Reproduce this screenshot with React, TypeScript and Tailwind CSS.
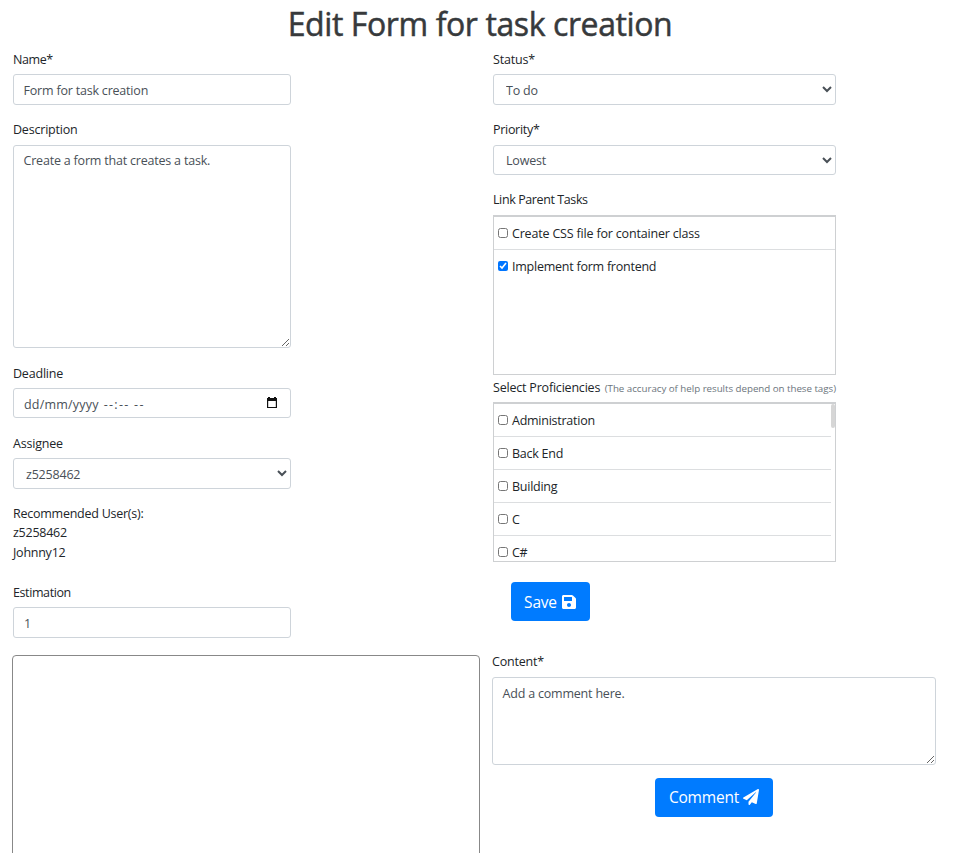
import { FaSave, FaPaperPlane } from "react-icons/fa";

const field =
  "block w-full rounded-[3px] border border-[#ced4da] bg-white text-[12.5px] leading-[19px] tracking-[-0.2px] text-[#495057] outline-none";

function Label({ children, className = "" }: { children: React.ReactNode; className?: string }) {
  return (
    <label className={`block h-6 pt-px text-[12.5px] leading-[18px] tracking-[-0.2px] whitespace-nowrap ${className}`}>
      {children}
    </label>
  );
}

function CheckRow({
  label,
  checked = false,
  last = false,
  className = "pt-px",
}: {
  label: string;
  checked?: boolean;
  last?: boolean;
  className?: string;
}) {
  return (
    <label
      className={`flex h-[33px] shrink-0 items-center gap-1 pl-1 text-[12.5px] ${last ? "pb-px" : "border-b border-[#dcdee0]"}`}
    >
      <input type="checkbox" defaultChecked={checked} className="m-0 size-[10px] shrink-0" />
      <span className={`leading-5 ${className}`}>{label}</span>
    </label>
  );
}

export default function App() {
  return (
    <div className="h-[853px] w-[953px] overflow-hidden bg-white font-['Open_Sans','Noto_Sans',sans-serif] text-[#212529]">
      <h1 className="h-[50px] w-[960px] pt-[5px] text-center text-[32px] leading-[38px] font-medium tracking-[-0.4px] whitespace-nowrap text-[#373a3c] [-webkit-text-stroke:0.5px_#373a3c]">
        Edit Form for task creation
      </h1>
      <div className="flex h-[605px] pl-[13px]">
        <div className="mr-[202px] w-[278px]">
          <Label className="tracking-[-0.4px]">Name*</Label>
          <input className={`${field} h-[31px] px-[9.5px] pt-[2px]`} defaultValue="Form for task creation" />
          <Label className="mt-[15px]">Description</Label>
          <textarea
            className={`${field} mt-px h-[203px] px-[9.5px] pt-[5px]`}
            defaultValue="Create a form that creates a task."
          />
          <Label className="mt-4">Deadline</Label>
          <div className={`${field} flex h-[30px] items-center pr-[12px] pl-[10px]`}>
            <span className="pt-[2px] tracking-[0.2px]">dd/mm/yyyy</span>
            <span className="ml-[5px] pt-[2px] tracking-[1.3px]">--:-- --</span>
            <svg width="12" height="12" viewBox="0 0 12 12" className="ml-auto shrink-0">
              <path d="M2 0h2v1h4V0h2v1h1v10H1V1h1zM2.2 4v6h7.6V4z" fill="#111" fillRule="evenodd" />
            </svg>
          </div>
          <Label className="mt-4">Assignee</Label>
          <select className={`${field} h-[31px] pt-[2px] pr-px pl-[8px]`}>
            <option>z5258462</option>
          </select>
          <div className="mt-[15px] h-[79px] text-[12.5px] leading-[19.5px] tracking-[-0.25px]">
            <p className="leading-[19px]">Recommended User(s):</p>
            <p>z5258462</p>
            <p>Johnny12</p>
          </div>
          <Label className="tracking-[-0.4px]">Estimation</Label>
          <input className={`${field} h-[31px] px-[10px] pt-[2px]`} defaultValue="1" />
        </div>
        <div className="w-[343px]">
          <Label>Status*</Label>
          <select className={`${field} h-[31px] pt-[2px] pr-px pl-[8px]`}>
            <option>To do</option>
          </select>
          <Label className="mt-[15px] tracking-[-0.3px]">Priority*</Label>
          <select className={`${field} mt-px h-[30px] pr-px pl-[8px]`}>
            <option>Lowest</option>
          </select>
          <Label className="mt-[15px] tracking-[-0.4px]">Link Parent Tasks</Label>
          <div className="mt-px h-[160px] border border-t-2 border-[#ced0d2]">
            <CheckRow label="Create CSS file for container class" className="pt-px tracking-[-0.18px]" />
            <CheckRow label="Implement form frontend" checked last className="pt-px tracking-[-0.24px]" />
          </div>
          <div className="mt-[3px] flex h-6 items-baseline justify-between whitespace-nowrap">
            <span className="text-[12.5px] leading-[19px] tracking-[-0.2px]">Select Proficiencies</span>
            <span className="text-[9.75px] tracking-[-0.03px] text-[#6c757d]">
              (The accuracy of help results depend on these tags)
            </span>
          </div>
          <div className="flex h-[160px] overflow-hidden border border-t-2 border-[#ced0d2] tracking-[-0.25px]">
            <div className="flex grow flex-col">
              <CheckRow label="Administration" className="pt-[2px]" />
              <CheckRow label="Back End" className="pt-[2px]" />
              <CheckRow label="Building" className="pt-[2px]" />
              <CheckRow label="C" />
              <CheckRow label="C#" last />
            </div>
            <div className="h-[24px] w-[4px] rounded-[2px] bg-[#d6d6d6]" />
          </div>
          <button className="mt-5 ml-[18px] flex h-[39px] w-[79px] items-center justify-center gap-1 rounded-[4px] bg-[#007bff] text-[15.5px] tracking-[-0.2px] text-white">
            <span className="pt-[2px]">Save</span>
            <FaSave size={16} />
          </button>
        </div>
      </div>
      <div className="flex pl-3">
        <div className="h-[220px] w-[468px] rounded-[4px] border border-[#888]" />
        <div className="ml-3 w-[444px]">
          <Label className="mt-[-3px] h-[25px]">Content*</Label>
          <textarea className={`${field} h-[88px] px-[9.5px] pt-[6px]`} defaultValue="Add a comment here." />
          <button className="mx-auto mt-[13px] flex h-[39px] w-[118px] items-center justify-center gap-1 rounded-[4px] bg-[#007bff] pb-px text-[15.5px] tracking-[-0.2px] text-white">
            <span className="pt-[2px]">Comment</span>
            <FaPaperPlane size={16} />
          </button>
        </div>
      </div>
    </div>
  );
}
